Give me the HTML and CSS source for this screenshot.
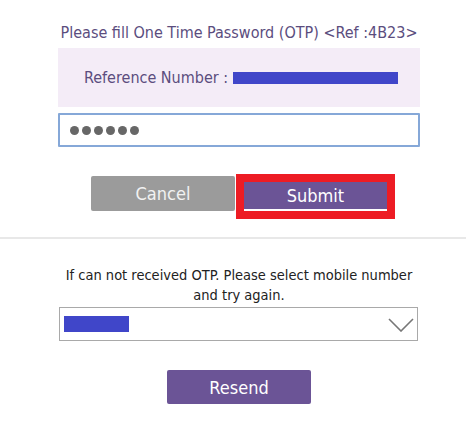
FILE: index.html
```html
<!DOCTYPE html>
<html>
<head>
  <title>OTP</title>
  <meta name="viewport" content="width=device-width, initial-scale=1.0">
  <link rel="stylesheet" href="styles.css">
</head>
<body>

  <div class="panel">
    <p class="title">Please fill One Time Password (OTP) &lt;Ref :4B23&gt;</p>
    <div class="ref-box">
      <span>Reference Number :</span>
      <span class="mask ref-mask"></span>
    </div>
    <div class="otp-input">
      <span class="dot"></span><span class="dot"></span><span class="dot"></span>
      <span class="dot"></span><span class="dot"></span><span class="dot"></span>
    </div>
    <div class="actions">
      <button class="btn btn-cancel">Cancel</button>
      <span class="highlight"><button class="btn btn-submit">Submit</button></span>
    </div>
  </div>

  <hr class="divider">

  <div class="panel">
    <p class="hint">If can not received OTP. Please select mobile number<br>and try again.</p>
    <div class="select">
      <span class="mask phone-mask"></span>
      <svg class="chevron" width="26" height="14" viewBox="0 0 26 14">
        <path d="M1 1 L13 13 L25 1" fill="none" stroke="#777" stroke-width="1.6"/>
      </svg>
    </div>
    <div class="resend-row">
      <button class="btn btn-resend">Resend</button>
    </div>
  </div>

</body>
</html>
```

FILE: styles.css
```css
body {
  margin: 0;
  font-family: "DejaVu Sans", sans-serif;
  font-stretch: condensed;
  background-color: #fff;
  color: #222;
}

.panel {
  width: 362px;
  margin-left: 58px;
}

.title {
  margin: 0;
  padding-top: 24px;
  height: 24px;
  line-height: 18px;
  font-size: 16px;
  text-align: center;
  color: #5b4d7e;
}

.ref-box {
  height: 59px;
  background-color: #f4ecf7;
  display: flex;
  align-items: center;
  justify-content: center;
  gap: 5px;
  padding-left: 4px;
  font-size: 16px;
  color: #5b4d7e;
}

.mask {
  display: inline-block;
  background-color: #4046c9;
}

.ref-mask {
  width: 165px;
  height: 12px;
}

.otp-input {
  margin-top: 6px;
  height: 30px;
  border: 2px solid #86a8d8;
  border-radius: 1px;
  display: flex;
  align-items: center;
  gap: 3px;
  padding-left: 10px;
}

.dot {
  width: 9px;
  height: 9px;
  border-radius: 50%;
  background-color: #676767;
}

.actions {
  margin-top: 27px;
  padding-left: 33px;
  display: flex;
  align-items: flex-start;
  gap: 1px;
}

.btn {
  border: none;
  border-radius: 2px;
  width: 144px;
  height: 35px;
  font-family: inherit;
  font-stretch: condensed;
  font-size: 18px;
  color: #fff;
  cursor: pointer;
}

.btn-cancel {
  margin-top: 2px;
  background-color: #9b9b9b;
  color: #f2f2f2;
}

.highlight {
  display: inline-block;
  border: 8px solid #ed1c24;
}

.btn-submit {
  display: block;
  width: 143px;
  height: 29px;
  border-radius: 0;
  background-color: #6b5496;
  border-bottom: 2px solid #fff;
  line-height: 24px;
  padding: 0;
}

.divider {
  margin: 18px 0 0;
  border: none;
  border-top: 2px solid #e8e8e8;
}

.hint {
  margin: 0;
  padding-top: 26px;
  font-size: 14.5px;
  line-height: 20px;
  text-align: center;
}

.select {
  box-sizing: border-box;
  margin-top: 2px;
  margin-left: 1px;
  width: 359px;
  height: 34px;
  border: 1px solid #a9a9a9;
  display: flex;
  align-items: center;
  justify-content: space-between;
  padding: 0 3px 0 4px;
}

.phone-mask {
  width: 65px;
  height: 16px;
}

.chevron {
  display: block;
  margin-top: 1px;
}

.resend-row {
  margin-top: 29px;
  padding-left: 109px;
}

.btn-resend {
  height: 34px;
  background-color: #6b5496;
}
```
